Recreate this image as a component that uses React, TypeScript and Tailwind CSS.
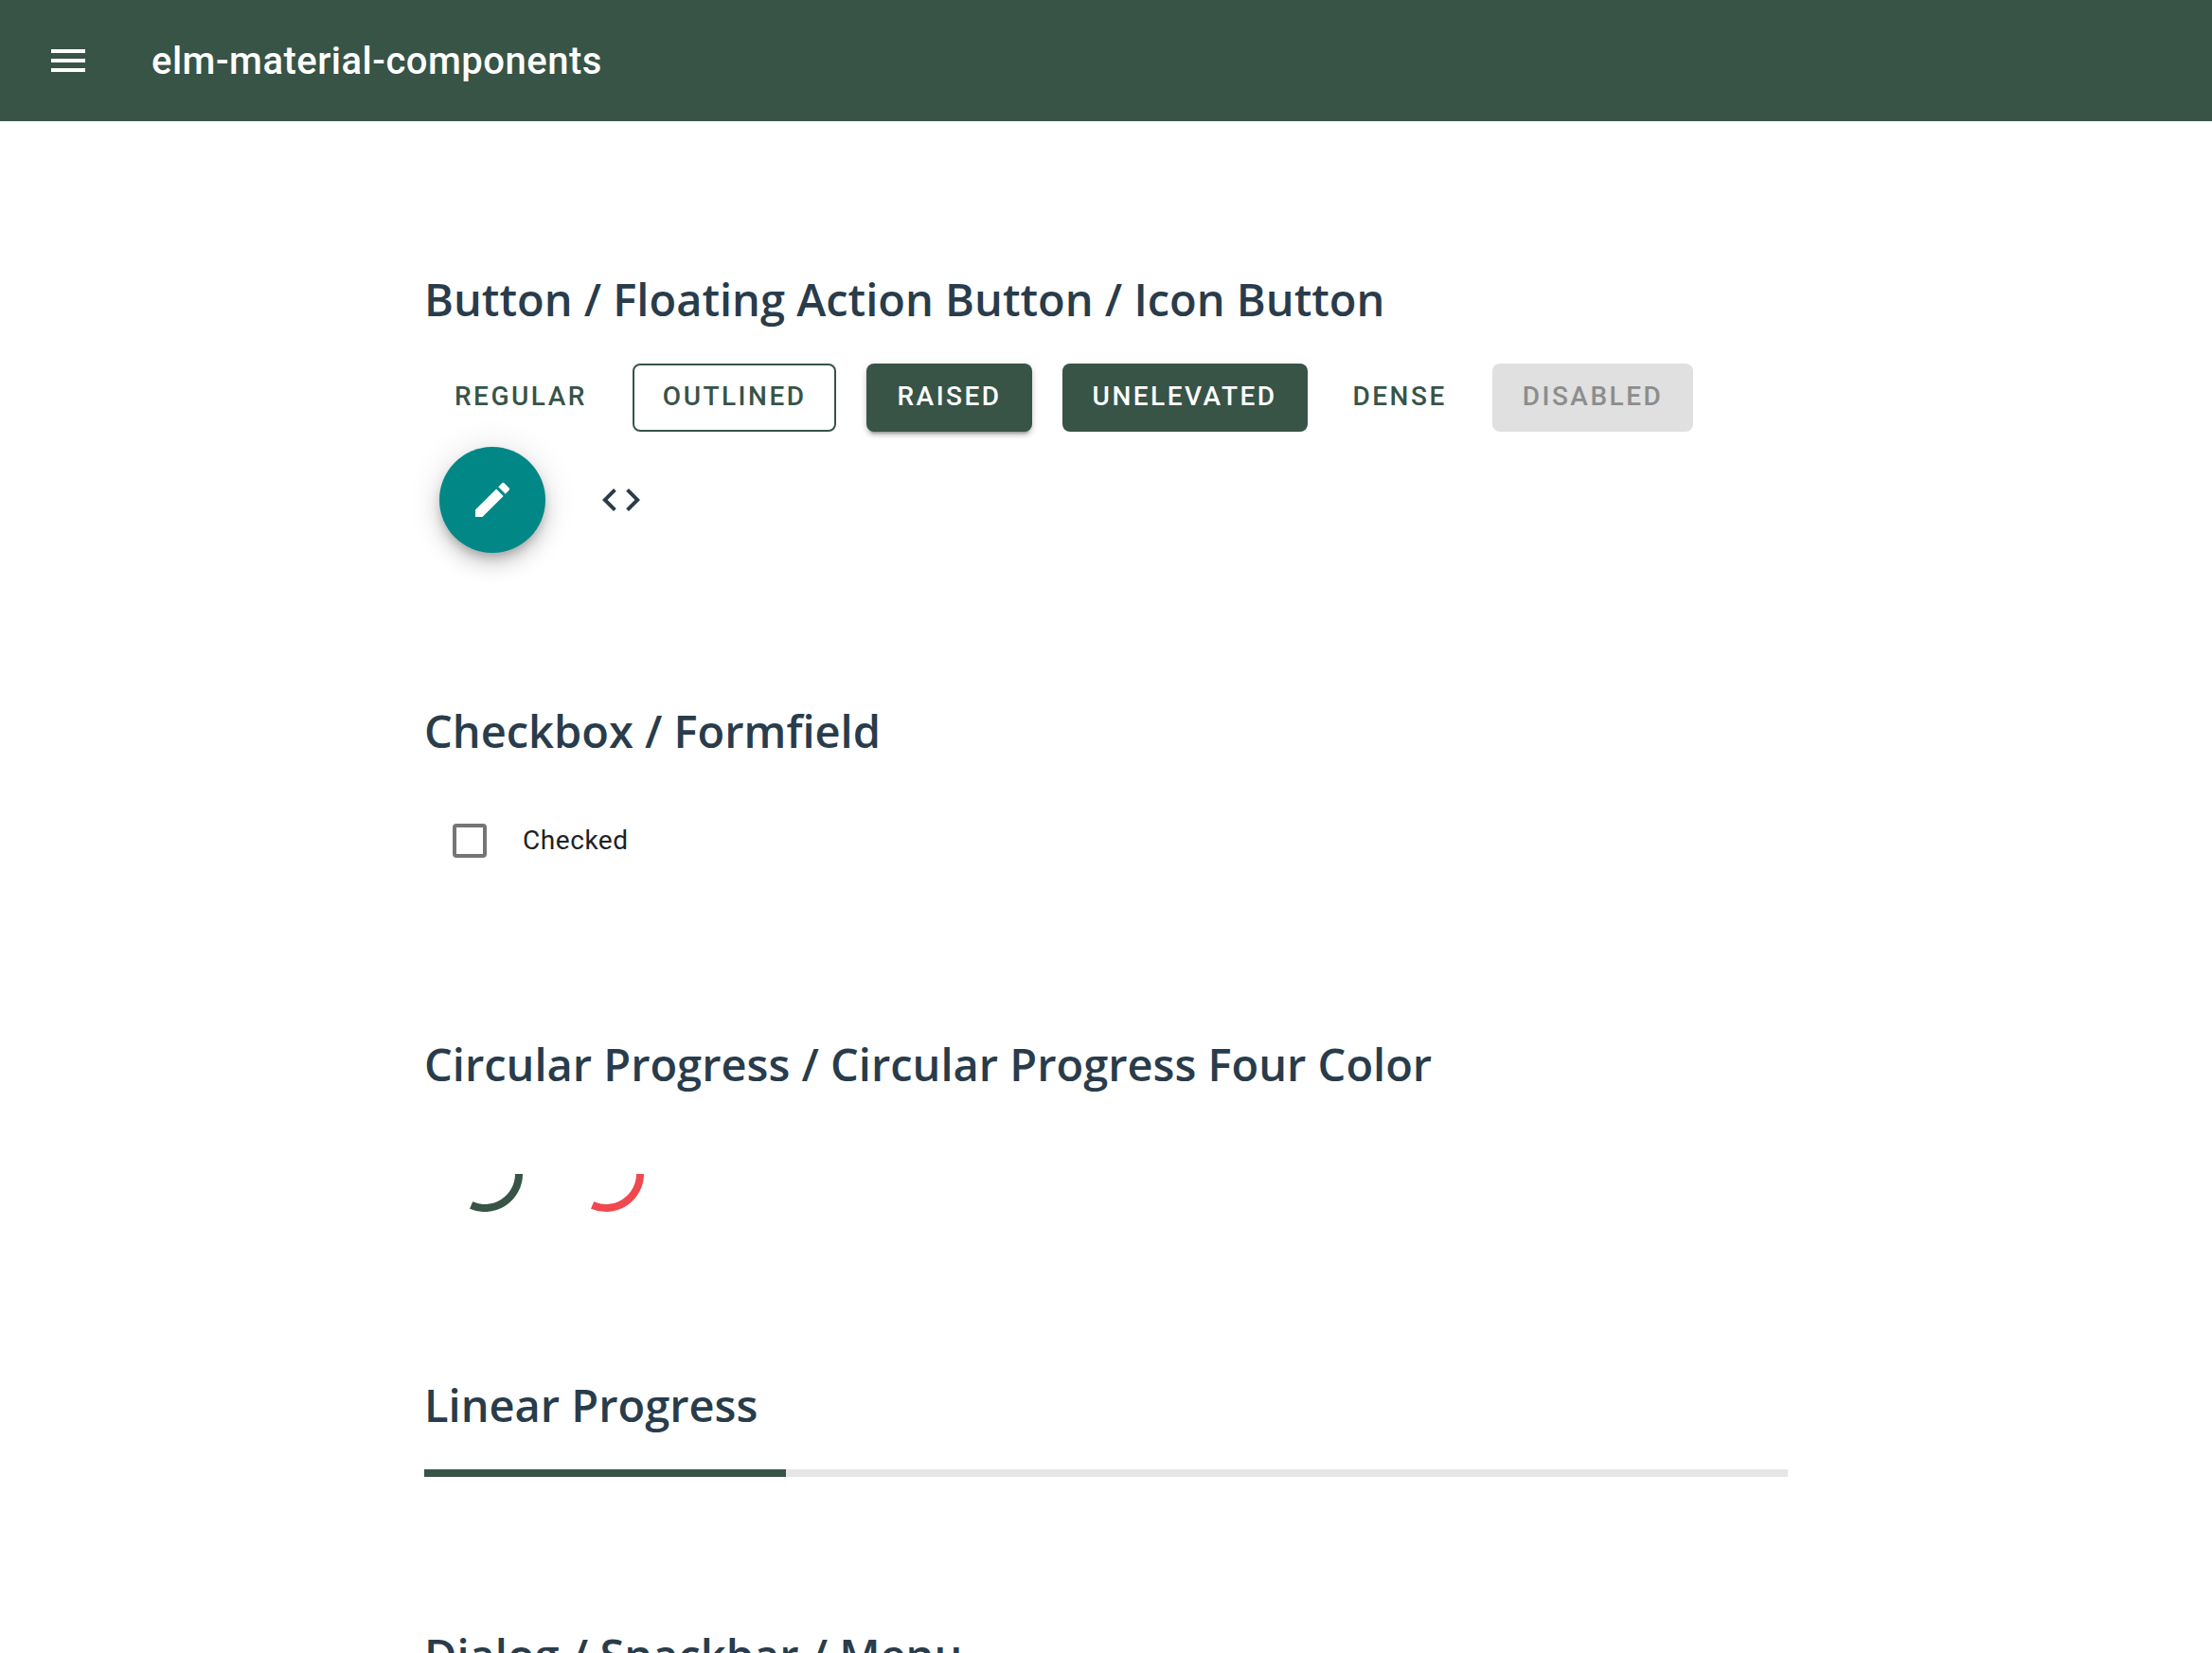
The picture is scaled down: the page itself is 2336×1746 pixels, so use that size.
import { useState, type ReactNode } from "react";
import { MdCode, MdEdit, MdMenu } from "react-icons/md";

function Section({ title, children }: { title: string; children?: ReactNode }) {
  return (
    <section className="pt-39">
      <h2 className="mb-9 font-['Open_Sans',sans-serif] text-[47px] leading-[64px] font-semibold text-[#293c4b]">
        {title}
      </h2>
      {children}
    </section>
  );
}

type Variant = "text" | "outlined" | "raised" | "unelevated" | "disabled";

const variants: Record<Variant, string> = {
  text: "px-4 text-[#375447]",
  outlined: "border-2 border-[#375447] px-[30px] text-[#375447]",
  raised:
    "bg-[#375447] px-8 text-white shadow-[0_6px_2px_-4px_rgba(0,0,0,0.2),0_4px_4px_rgba(0,0,0,0.14),0_2px_10px_rgba(0,0,0,0.12)]",
  unelevated: "bg-[#375447] px-8 text-white",
  disabled: "bg-[#e0e0e0] px-8 text-[#8d8d8d]",
};

function Button({ variant, children }: { variant: Variant; children: ReactNode }) {
  return (
    <button
      type="button"
      disabled={variant === "disabled"}
      className={`flex h-[72px] items-center rounded-lg pb-0.5 text-[28px] font-medium tracking-[0.089em] uppercase ${variants[variant]}`}
    >
      {children}
    </button>
  );
}

function CircularProgress({ label, className }: { label: string; className: string }) {
  return (
    <svg
      role="progressbar"
      aria-label={label}
      viewBox="0 0 96 96"
      className={`size-24 ${className}`}
      fill="none"
      stroke="currentColor"
      strokeWidth="8"
    >
      <path d="M84 48A36 36 0 0 1 33.6 81" />
    </svg>
  );
}

function LinearProgress({ value }: { value: number }) {
  return (
    <div
      role="progressbar"
      aria-label="Linear progress"
      aria-valuenow={value}
      aria-valuemin={0}
      aria-valuemax={100}
      className="h-2 bg-[#e6e6e6]"
    >
      <div className="h-full bg-[#375447]" style={{ width: `${value}%` }} />
    </div>
  );
}

export default function App() {
  const [checked, setChecked] = useState(false);

  return (
    <div className="flex h-screen flex-col bg-white font-[Roboto,sans-serif]">
      <header className="flex h-32 shrink-0 items-center gap-16 bg-[#375447] px-12 text-white">
        <button type="button" aria-label="Open menu">
          <MdMenu className="size-12" />
        </button>
        <h1 className="pt-0.5 text-[40px] leading-[64px] font-medium tracking-[0.0125em]">
          elm-material-components
        </h1>
      </header>

      <main className="min-h-0 flex-1 overflow-y-auto [scrollbar-width:none]">
        <div className="mx-auto w-full max-w-[1440px]">
          <Section title="Button / Floating Action Button / Icon Button">
            <div className="flex flex-wrap gap-x-8 gap-y-4 px-4">
              <Button variant="text">Regular</Button>
              <Button variant="outlined">Outlined</Button>
              <Button variant="raised">Raised</Button>
              <Button variant="unelevated">Unelevated</Button>
              <Button variant="text">Dense</Button>
              <Button variant="disabled">Disabled</Button>
            </div>
            <div className="mt-4 flex items-center gap-8 px-4">
              <button
                type="button"
                aria-label="Edit"
                className="flex size-28 items-center justify-center rounded-full bg-[#018786] text-white shadow-[0_6px_10px_-2px_rgba(0,0,0,0.2),0_12px_20px_rgba(0,0,0,0.14),0_2px_36px_rgba(0,0,0,0.12)]"
              >
                <MdEdit className="size-12" />
              </button>
              <button
                type="button"
                aria-label="Code"
                className="flex size-24 items-center justify-center text-[#293c4b]"
              >
                <MdCode className="size-12" />
              </button>
            </div>
          </Section>

          <Section title="Checkbox / Formfield">
            <div className="flex p-2">
              <label className="flex items-center text-[28px] leading-10 tracking-[0.02em] text-[#212121]">
                <span className="flex size-20 items-center justify-center">
                  <input
                    type="checkbox"
                    checked={checked}
                    onChange={(e) => setChecked(e.target.checked)}
                    className="size-9 appearance-none rounded border-4 border-[#757575] checked:border-[#018786] checked:bg-[#018786]"
                  />
                </span>
                <span className="pl-4">Checked</span>
              </label>
            </div>
          </Section>

          <Section title="Circular Progress / Circular Progress Four Color">
            <div className="flex gap-8 px-4 pb-2">
              <CircularProgress label="Circular progress" className="text-[#375447]" />
              <CircularProgress label="Four color circular progress" className="text-[#f0484f]" />
            </div>
          </Section>

          <Section title="Linear Progress">
            <LinearProgress value={26.5} />
          </Section>

          <Section title="Dialog / Snackbar / Menu" />
        </div>
      </main>
    </div>
  );
}
